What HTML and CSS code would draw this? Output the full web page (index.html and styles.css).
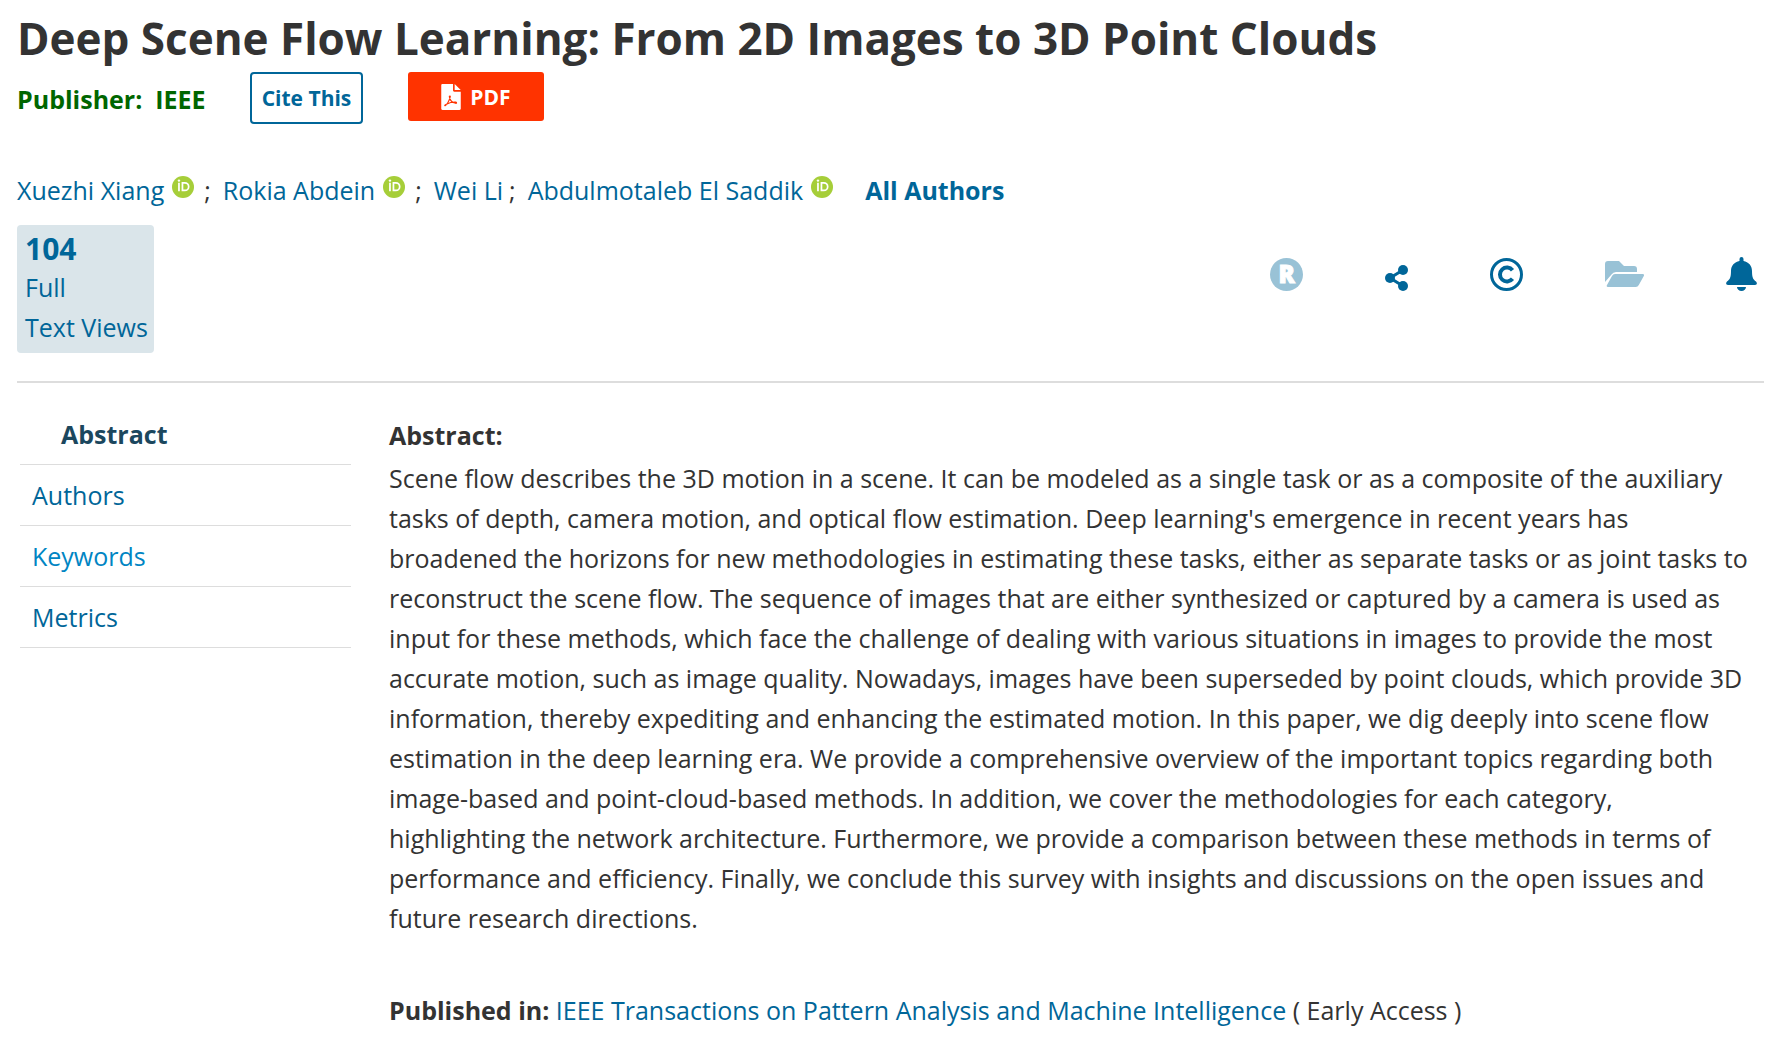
FILE: index.html
```html
<!DOCTYPE html>
<html lang="en">
<head>
    <meta charset="UTF-8">
    <meta name="viewport" content="width=device-width, initial-scale=1.0">
    <title>Deep Scene Flow Learning: From 2D Images to 3D Point Clouds</title>
    <link rel="stylesheet" href="styles.css">
</head>
<body>
    <!-- Shared ORCID badge -->
    <svg class="sprite" aria-hidden="true">
        <symbol id="orcid" viewBox="0 0 24 24">
            <circle cx="12" cy="12" r="12" fill="#a6ce39"/>
            <circle cx="7.6" cy="5" r="1.3" fill="#fff"/>
            <path d="M7.6 7.4v9.200M11.400 7.4v8.400h2.600a4.200 4.200 0 0 0 0-8.400z" fill="none" stroke="#fff" stroke-width="1.9"/>
        </symbol>
    </svg>

    <header class="document-header">
        <h1 class="document-title">Deep Scene Flow Learning: From 2D Images to 3D Point Clouds</h1>

        <div class="publisher-row">
            <span class="publisher">Publisher:&nbsp; IEEE</span>
            <button type="button" class="cite-button">Cite This</button>
            <button type="button" class="pdf-button">
                <svg class="pdf-icon" viewBox="0 0 384 512" aria-hidden="true">
                    <path fill="#fff" d="M24 0h208v128c0 13 11 24 24 24h128v336c0 13-11 24-24 24H24c-13 0-24-11-24-24V24C0 11 11 0 24 0zM264 0l120 120H264z"/>
                    <path fill="none" stroke="#ff3300" stroke-width="22" stroke-linejoin="round" d="M78 426c28-12 82-92 100-176 4-20-22-20-18 2 12 62 62 116 122 128 26 4 26-20 4-24-60-8-130 16-194 46-24 12-30 24-14 24z"/>
                </svg>
                PDF
            </button>
        </div>

        <div class="authors-row">
            <span class="author"><a href="#">Xuezhi Xiang</a><svg class="orcid"><use href="#orcid"/></svg></span>
            <span class="separator">;</span>
            <span class="author"><a href="#">Rokia Abdein</a><svg class="orcid"><use href="#orcid"/></svg></span>
            <span class="separator">;</span>
            <span class="author"><a href="#">Wei Li</a></span>
            <span class="separator tight">;</span>
            <span class="author"><a href="#">Abdulmotaleb El Saddik</a><svg class="orcid"><use href="#orcid"/></svg></span>
            <a href="#" class="all-authors">All Authors</a>
        </div>

        <div class="metrics-row">
            <button type="button" class="metric">
                <span class="metric-count">104</span>
                <span>Full</span>
                <span>Text Views</span>
            </button>

            <div class="toolbar">
                <button type="button" class="tool disabled" aria-label="References">
                    <svg width="33" height="33" viewBox="0 0 33 33">
                        <circle cx="16.5" cy="16.5" r="16.5" fill="currentColor"/>
                        <text x="16.5" y="25" text-anchor="middle" class="tool-letter">R</text>
                    </svg>
                </button>
                <button type="button" class="tool tool-share" aria-label="Share">
                    <svg width="23" height="26" viewBox="0 0 23 26">
                        <path d="M18 5L5 13l13 8" fill="none" stroke="currentColor" stroke-width="3"/>
                        <circle cx="18" cy="5" r="5" fill="currentColor"/>
                        <circle cx="5" cy="13" r="5" fill="currentColor"/>
                        <circle cx="18" cy="21" r="5" fill="currentColor"/>
                    </svg>
                </button>
                <button type="button" class="tool" aria-label="Copyright">
                    <svg width="33" height="33" viewBox="0 0 33 33" fill="none" stroke="currentColor">
                        <circle cx="16.5" cy="16.5" r="15" stroke-width="3"/>
                        <path d="M22.500 12.200a7 7 0 1 0 0 8.600" stroke-width="4"/>
                    </svg>
                </button>
                <button type="button" class="tool disabled" aria-label="Save">
                    <svg width="39" height="26" viewBox="0 0 39 26" fill="currentColor">
                        <path d="M0 21V3a3 3 0 0 1 3-3h11l5 5h10a3 3 0 0 1 3 3v3H11q-3 0-4.500 2.500z"/>
                        <path d="M10 13h28q1.500.5.8 2l-5 9q-1 2-3 2H3q-2-.5-1-2l5-9q1-2 3-2z"/>
                    </svg>
                </button>
                <button type="button" class="tool" aria-label="Alerts">
                    <svg width="31" height="34" viewBox="0 0 31 34" fill="currentColor">
                        <path d="M13.500 2a2 2 0 0 1 4 0v2C22.500 5 26 8.500 26 14c0 6 1 8.500 4 10.500 1.500 1.500 1 3.500-1 3.500H2c-2 0-2.500-2-1-3.500C4 22.500 5 20 5 14 5 8.500 8.500 5 13.500 4z"/>
                        <path d="M11 30h9a4.500 4 0 0 1-9 0z"/>
                    </svg>
                </button>
            </div>
        </div>
    </header>

    <div class="document-body">
        <nav class="side-nav">
            <a href="#abstract" class="active">Abstract</a>
            <a href="#authors">Authors</a>
            <a href="#keywords" class="hovered">Keywords</a>
            <a href="#metrics">Metrics</a>
        </nav>

        <main class="content" id="abstract">
            <h2>Abstract:</h2>
            <p>Scene flow describes the 3D motion in a scene. It can be modeled as a single task or as a composite of the auxiliary tasks of depth, camera motion, and optical flow estimation. Deep learning's emergence in recent years has broadened the horizons for new methodologies in estimating these tasks, either as separate tasks or as joint tasks to reconstruct the scene flow. The sequence of images that are either synthesized or captured by a camera is used as input for these methods, which face the challenge of dealing with various situations in images to provide the most accurate motion, such as image quality. Nowadays, images have been superseded by point clouds, which provide 3D information, thereby expediting and enhancing the estimated motion. In this paper, we dig deeply into scene flow estimation in the deep learning era. We provide a comprehensive overview of the important topics regarding both image-based and point-cloud-based methods. In addition, we cover the methodologies for each category, highlighting the network architecture. Furthermore, we provide a comparison between these methods in terms of performance and efficiency. Finally, we conclude this survey with insights and discussions on the open issues and future research directions.</p>
            <p class="published"><strong>Published in:</strong> <a href="#">IEEE Transactions on Pattern Analysis and Machine Intelligence</a> ( Early Access )</p>
        </main>
    </div>
</body>
</html>
```
FILE: styles.css
```css
* {
    box-sizing: border-box;
}

body {
    margin: 0;
    padding: 8px 16px 0 17px;
    background: #fff;
    color: #333;
    font-family: "Open Sans", "Noto Sans", sans-serif;
    font-size: 25px;
    line-height: 40px;
}

a {
    color: #006699;
    text-decoration: none;
}

button {
    font-family: inherit;
    cursor: pointer;
}

.sprite {
    display: none;
}

/* Header */
.document-title {
    margin: 0;
    font-size: 44px;
    line-height: 60px;
    font-weight: 700;
}

.publisher-row {
    display: flex;
    align-items: flex-start;
    margin-top: 4px;
}

.publisher {
    width: 233px;
    padding-top: 7px;
    color: #006600;
    font-weight: 700;
}

.cite-button {
    width: 113px;
    height: 52px;
    margin-right: 45px;
    padding: 0;
    border: 2px solid #006699;
    border-radius: 4px;
    background: #fff;
    color: #006699;
    font-size: 21px;
    font-weight: 700;
}

.pdf-button {
    display: flex;
    justify-content: center;
    align-items: center;
    gap: 9px;
    width: 136px;
    height: 49px;
    padding: 0;
    border: none;
    border-radius: 3px;
    background: #ff3300;
    color: #fff;
    font-size: 21px;
    font-weight: 700;
}

.pdf-icon {
    width: 20px;
    height: 26px;
}

.authors-row {
    display: flex;
    margin-top: 46px;
}

.author {
    display: flex;
}

.orcid {
    width: 22px;
    height: 22px;
    margin: 6px 0 0 8px;
}

.separator {
    margin: 0 12px 0 10px;
}

.separator.tight {
    margin-left: 6px;
}

.all-authors {
    margin-left: 32px;
    font-weight: 700;
}

.metrics-row {
    display: flex;
    justify-content: space-between;
    align-items: flex-start;
    margin-top: 15px;
    padding-bottom: 28px;
    border-bottom: 2px solid #ddd;
}

.metric {
    display: flex;
    flex-direction: column;
    align-items: flex-start;
    padding: 6px 6px 6px 8px;
    border: none;
    border-radius: 4px;
    background: #dae5ea;
    color: #006699;
    font-size: 25px;
    line-height: 40px;
}

.metric-count {
    font-size: 30px;
    line-height: 36px;
    font-weight: 700;
}

.toolbar {
    display: flex;
    align-items: center;
    gap: 82px;
    padding: 32px 7px 0 0;
}

.tool {
    padding: 0;
    border: none;
    background: none;
    color: #006699;
}

.tool svg {
    display: block;
}

.tool.disabled {
    color: #99c2d6;
}

.tool-share {
    padding-top: 8px;
}

.tool-letter {
    fill: #fff;
    stroke: #fff;
    stroke-width: 1px;
    font-family: "Open Sans", sans-serif;
    font-size: 24px;
    font-weight: 800;
}

/* Sidebar and abstract */
.document-body {
    display: flex;
    gap: 38px;
    padding-top: 21px;
}

.side-nav {
    flex: none;
    width: 331px;
    margin-left: 3px;
}

.side-nav a {
    display: block;
    padding: 10px 12px;
    border-bottom: 1px solid #ddd;
}

.side-nav a.active {
    padding-left: 41px;
    color: #1b475e;
    font-weight: 700;
}

.side-nav a.hovered {
    color: #0085c3;
}

.content {
    flex: 1;
    padding-right: 15px;
}

.content h2 {
    margin: 11px 0 3px;
    font-size: 25px;
    line-height: 40px;
}

.content p {
    margin: 0;
}

.content .published {
    margin-top: 52px;
}
```
